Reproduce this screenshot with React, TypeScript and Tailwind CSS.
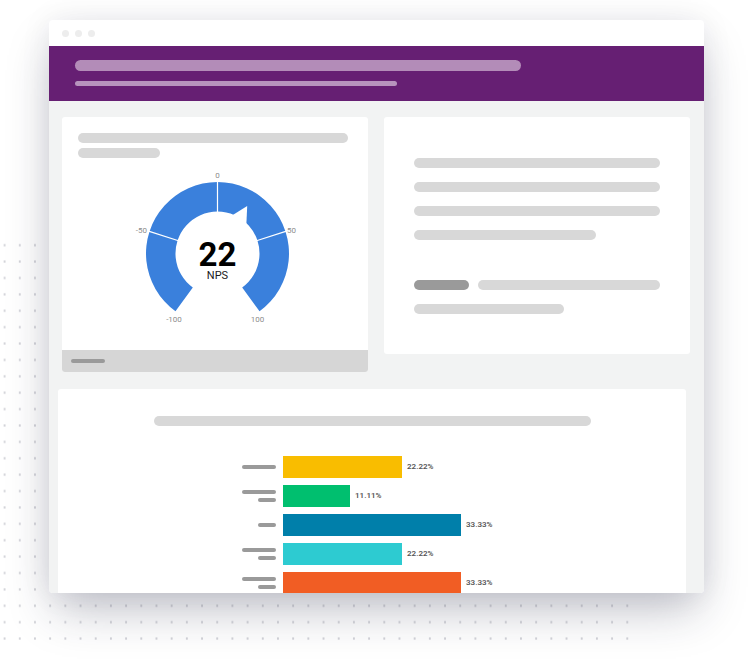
import React from 'react';

type Bar = {
    color: string;
    width: string;
    value: string;
    labels: string[];
};

// label pills on the left of each bar: long = 34px, short = 18px
const bars: Bar[] = [
    { color: 'bg-[#f9bd00]', width: 'w-[119px]', value: '22.22%', labels: ['w-[34px]'] },
    { color: 'bg-[#00bf6f]', width: 'w-[67px]', value: '11.11%', labels: ['w-[34px]', 'w-[18px]'] },
    { color: 'bg-[#007faa]', width: 'w-[178px]', value: '33.33%', labels: ['w-[18px]'] },
    { color: 'bg-[#2dcbd1]', width: 'w-[119px]', value: '22.22%', labels: ['w-[34px]', 'w-[18px]'] },
    { color: 'bg-[#f15d24]', width: 'w-[178px]', value: '33.33%', labels: ['w-[34px]', 'w-[18px]'] },
];

const Gauge: React.FC = () => {
    return (
        <div className="relative h-[192px] w-[306px]">
            <svg viewBox="0 0 306 192" className="block w-[306px] h-[192px]">
                {/* blue ring, -144deg to 144deg */}
                <path
                    d="M 113.47 153.34 A 71.5 71.5 0 1 1 197.53 153.34 L 180.19 129.48 A 42 42 0 1 0 130.81 129.48 Z"
                    fill="#3a80dc"
                />
                {/* section dividers */}
                <line x1="116.5" y1="82.8" x2="86.5" y2="73.1" stroke="#ffffff" strokeWidth="1.2" />
                <line x1="155.5" y1="54.5" x2="155.5" y2="23" stroke="#ffffff" strokeWidth="1.2" />
                <line x1="194.5" y1="82.8" x2="224.5" y2="73.1" stroke="#ffffff" strokeWidth="1.2" />
                {/* needle */}
                <polygon points="185.2,48 169.2,57.9 184.3,67.7" fill="#ffffff" />

                <g className="fill-[#8c8c8c] text-[8px] font-['Roboto',sans-serif]">
                    <text x="155.5" y="20" textAnchor="middle">0</text>
                    <text x="85" y="75" textAnchor="end">-50</text>
                    <text x="225" y="75" textAnchor="start">50</text>
                    <text x="112" y="164" textAnchor="middle">-100</text>
                    <text x="195.5" y="164" textAnchor="middle">100</text>
                </g>
            </svg>
            {/* score sits over the ring's hole */}
            <div className="absolute left-[105px] top-[84px] flex w-[101px] flex-col items-center">
                <span className="text-[33px] font-bold leading-[26px] text-black">22</span>
                <span className="mt-[3px] text-[11px] leading-[9px] text-[#1a1a1a]">NPS</span>
            </div>
        </div>
    );
};

const App: React.FC = () => {
    return (
        <div className="relative w-[753px] h-[671px] overflow-hidden bg-white pt-[20px] font-['Roboto',sans-serif]">
            {/* dotted backdrop */}
            <div className="absolute left-[-3px] top-[237px] w-[640px] h-[410px] bg-[radial-gradient(circle,#d2d3d8_0.9px,transparent_1.4px)] bg-[length:15.2px_16.4px]" />

            {/* browser window */}
            <div className="relative ml-[49px] w-[655px] h-[573px] overflow-hidden rounded-[4px] bg-white shadow-[0_22px_44px_-6px_rgba(30,32,60,0.28),0_0_32px_rgba(30,32,60,0.07)]">
                <div className="flex h-[26px] items-center gap-[6px] pl-[13px]">
                    <span className="h-[7px] w-[7px] rounded-full bg-[#ededed]" />
                    <span className="h-[7px] w-[7px] rounded-full bg-[#ededed]" />
                    <span className="h-[7px] w-[7px] rounded-full bg-[#ededed]" />
                </div>

                {/* header */}
                <div className="flex h-[55px] flex-col bg-[#661f73] pl-[26px] pt-[14px]">
                    <div className="h-[11px] w-[446px] rounded-full bg-[#b38cb8]" />
                    <div className="mt-[10px] h-[5px] w-[322px] rounded-full bg-[#b793bd]" />
                </div>

                {/* body */}
                <div className="h-full bg-[#f2f3f3] pt-[16px]">
                    <div className="flex items-start gap-[16px] pl-[13px]">
                        {/* NPS card */}
                        <div className="w-[306px] overflow-hidden rounded-[3px] bg-white">
                            <div className="flex flex-col gap-[5px] px-[16px] pt-[16px]">
                                <div className="h-[10px] w-[270px] rounded-full bg-[#d8d8d8]" />
                                <div className="h-[10px] w-[82px] rounded-full bg-[#d8d8d8]" />
                            </div>
                            <Gauge />
                            <div className="flex h-[22px] items-center bg-[#d6d6d6] pl-[9px]">
                                <div className="h-[4px] w-[34px] rounded-full bg-[#9a9a9a]" />
                            </div>
                        </div>

                        {/* text card */}
                        <div className="flex h-[237px] w-[306px] flex-col rounded-[3px] bg-white px-[30px] pt-[41px]">
                            <div className="flex flex-col gap-[14px]">
                                <div className="h-[10px] w-[246px] rounded-full bg-[#d8d8d8]" />
                                <div className="h-[10px] w-[246px] rounded-full bg-[#d8d8d8]" />
                                <div className="h-[10px] w-[246px] rounded-full bg-[#d8d8d8]" />
                                <div className="h-[10px] w-[182px] rounded-full bg-[#d8d8d8]" />
                            </div>
                            <div className="mt-[40px] flex gap-[9px]">
                                <div className="h-[10px] w-[55px] rounded-full bg-[#9a9a9a]" />
                                <div className="h-[10px] w-[182px] rounded-full bg-[#d8d8d8]" />
                            </div>
                            <div className="mt-[14px] h-[10px] w-[150px] rounded-full bg-[#d8d8d8]" />
                        </div>
                    </div>

                    {/* bar chart card */}
                    <div className="ml-[9px] mt-[17px] h-[260px] w-[628px] rounded-t-[3px] bg-white pt-[27px]">
                        <div className="mx-auto h-[10px] w-[437px] rounded-full bg-[#d8d8d8]" />
                        <div className="mt-[30px] flex flex-col gap-[7px] pl-[184px]">
                            {bars.map((bar, i) => (
                                <div key={i} className="flex h-[22px] items-center">
                                    <div className="flex w-[34px] flex-col items-end gap-[4px]">
                                        {bar.labels.map((w, j) => (
                                            <div key={j} className={`h-[4px] rounded-full bg-[#9a9a9a] ${w}`} />
                                        ))}
                                    </div>
                                    <div className={`ml-[7px] h-full ${bar.width} ${bar.color}`} />
                                    <span className="ml-[5px] text-[8px] font-semibold text-[#555]">{bar.value}</span>
                                </div>
                            ))}
                        </div>
                    </div>
                </div>
            </div>
        </div>
    );
};

export default App;
